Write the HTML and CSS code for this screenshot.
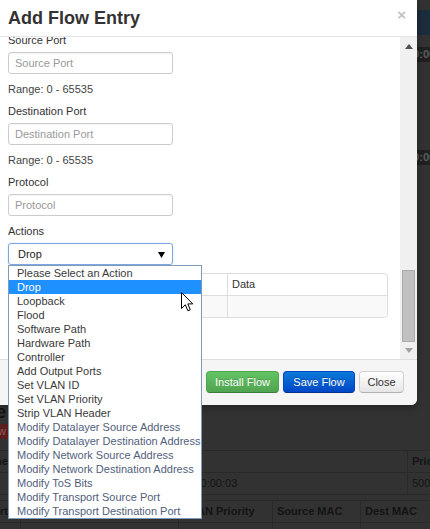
FILE: index.html
```html
<!DOCTYPE html>
<html>
<head>
<meta charset="utf-8">
<title>Add Flow Entry</title>
<link rel="stylesheet" href="styles.css">
</head>
<body>
<div class="page">
  <div class="navbar"></div>
  <div class="band band-1"><span class="c1"></span><span class="c2"></span><span class="c3"></span><span class="c4">00:00:00:00:00:00:00:01</span></div>
  <div class="band band-2"><span class="c1"></span><span class="c2"></span><span class="c3"></span><span class="c4">00:00:00:00:00:00:00:02</span></div>
  <div class="cut-row title-row"><h2 class="page-title">Flow Table</h2></div>
  <div class="cut-row btn-row"><span class="btn-danger">Add Flow</span></div>
  <div class="bg-table t1">
    <div class="bg-row head"><span class="c1">Name</span><span class="c2"></span><span class="c3"></span><span class="c4">Priority</span></div>
    <div class="bg-row"><span class="c1"></span><span class="c2"></span><span class="c3">00:00:00:00:00:00:00:03</span><span class="c4">500</span></div>
  </div>
  <div class="bg-table t2">
    <div class="bg-row head"><span class="c1">Port</span><span class="c2"></span><span class="c3">VLAN Priority</span><span class="c4">Source MAC</span><span class="c5">Dest MAC</span></div>
    <div class="bg-row"><span class="c1"></span><span class="c2">0.000</span><span class="c3">0</span><span class="c4">any</span><span class="c5">any</span></div>
  </div>
</div>

<div class="modal">
  <div class="modal-header">
    <h3>Add Flow Entry</h3>
    <span class="close">×</span>
  </div>
  <div class="modal-body">
    <div class="body-content">
      <div class="field">
        <label class="field-label">Source Port</label>
        <input class="text-input" type="text" placeholder="Source Port">
        <div class="help">Range: 0 - 65535</div>
      </div>
      <div class="field">
        <label class="field-label">Destination Port</label>
        <input class="text-input" type="text" placeholder="Destination Port">
        <div class="help">Range: 0 - 65535</div>
      </div>
      <div class="field">
        <label class="field-label">Protocol</label>
        <input class="text-input" type="text" placeholder="Protocol">
      </div>
      <div class="field">
        <label class="field-label">Actions</label>
        <div class="select">
          <span>Drop</span>
          <svg class="select-arrow" width="7" height="6" viewBox="0 0 7 6"><polygon points="0,0 7,0 3.5,6" fill="#000"/></svg>
        </div>
      </div>
      <div class="flow-table">
        <div class="ft-row ft-head"><span class="ft-cell"></span><span class="ft-cell ft-data">Data</span></div>
        <div class="ft-row ft-body"><span class="ft-cell"></span><span class="ft-cell ft-data"></span></div>
      </div>
    </div>
    <div class="scrollbar">
      <div class="sb-btn"><svg width="8" height="5" viewBox="0 0 8 5"><polygon points="0,5 4,0 8,5" fill="#505050"/></svg></div>
      <div class="sb-track"><div class="sb-thumb"></div></div>
      <div class="sb-btn"><svg width="8" height="5" viewBox="0 0 8 5"><polygon points="0,0 8,0 4,5" fill="#a3a3a3"/></svg></div>
    </div>
  </div>
  <div class="modal-footer">
    <button class="btn btn-success">Install Flow</button>
    <button class="btn btn-primary">Save Flow</button>
    <button class="btn btn-default">Close</button>
  </div>
</div>

<ul class="select-menu">
  <li>Please Select an Action</li>
  <li class="selected">Drop</li>
  <li>Loopback</li>
  <li>Flood</li>
  <li>Software Path</li>
  <li>Hardware Path</li>
  <li>Controller</li>
  <li>Add Output Ports</li>
  <li>Set VLAN ID</li>
  <li>Set VLAN Priority</li>
  <li>Strip VLAN Header</li>
  <li class="mod">Modify Datalayer Source Address</li>
  <li class="mod">Modify Datalayer Destination Address</li>
  <li class="mod">Modify Network Source Address</li>
  <li class="mod">Modify Network Destination Address</li>
  <li class="mod">Modify ToS Bits</li>
  <li class="mod">Modify Transport Source Port</li>
  <li class="mod">Modify Transport Destination Port</li>
</ul>

<svg class="cursor" width="13" height="20" viewBox="0 0 13 20"><path d="M0.5 0.5 V16.5 L4.3 12.8 L6.9 18.8 L9.3 17.8 L6.8 11.9 H11.8 Z" fill="#fff" stroke="#000" stroke-width="1" stroke-linejoin="miter"/></svg>
</body>
</html>
```

FILE: styles.css
```css
* { box-sizing: border-box; }

html, body {
  margin: 0;
  padding: 0;
}

body {
  width: 430px;
  height: 529px;
  overflow: hidden;
  position: relative;
  background: #323232;
  font-family: "Liberation Sans", Arial, sans-serif;
  font-size: 11px;
  color: #333;
}

/* ---------- background page (under the overlay) ---------- */
.page {
  margin-left: -20px;
  width: 470px;
  color: #141414;
}

.navbar {
  margin-top: 10px;
  height: 25px;
  background: #1b2c3d;
}

.band,
.bg-row {
  display: grid;
  grid-template-columns: 40px 94px 293px 1fr;
}

.band {
  background: #202020;
  color: #5e5e5e;
  line-height: 15px;
  height: 15px;
  font-weight: bold;
}

.band-1 { margin-top: 12px; }
.band-2 { margin-top: 88px; }

.band .c4 { padding-left: 0; }

.cut-row {
  width: 40px;
  display: flex;
  justify-content: flex-end;
  white-space: nowrap;
}

.title-row {
  margin-top: 237px;
  padding-right: 14px;
}

.page-title {
  margin: 0;
  font-size: 18px;
  line-height: 20px;
  font-weight: bold;
  color: #141414;
}

.btn-row {
  margin-top: 2px;
  padding-right: 12px;
}

.btn-danger {
  display: block;
  height: 15px;
  line-height: 15px;
  padding: 0 2px 0 6px;
  background: #5a1f1c;
  color: #8e5d5a;
  border-radius: 2px;
  font-size: 11px;
}

.bg-table {
  border-top: 1px solid #292929;
}

.t1 { margin-top: 11px; }
.t2 { margin-top: 5px; }

.bg-row {
  height: 22px;
  line-height: 21px;
  border-bottom: 1px solid #292929;
  white-space: nowrap;
}

.bg-row > span {
  padding-left: 4px;
  overflow: hidden;
}

.bg-row .c1 {
  display: flex;
  justify-content: flex-end;
  padding: 0 12px 0 0;
  overflow: visible;
}

.bg-row .c4 { border-left: 1px solid #292929; }

.bg-row.head { font-weight: bold; }

.t1 .c3 { padding-left: 4px; }

.t2 .bg-row {
  grid-template-columns: 40px 158px 94px 88px 1fr;
}

.t2 .bg-row > span + span { border-left: 1px solid #292929; }
.t2 .c2 { padding-left: 50px; }

/* ---------- modal ---------- */
.modal {
  position: absolute;
  left: 0;
  top: 0;
  width: 417px;
  background: #fff;
  border-radius: 0 0 6px 0;
  box-shadow: 0 3px 7px rgba(0, 0, 0, 0.3);
}

.modal-header {
  height: 37px;
  border-bottom: 1px solid #e5e5e5;
  display: flex;
  justify-content: space-between;
  align-items: flex-start;
  padding: 0 11px 0 8px;
}

.modal-header h3 {
  margin: 0;
  font-size: 18px;
  line-height: 36px;
  font-weight: bold;
  color: #333;
}

.close {
  font-size: 15px;
  line-height: 30px;
  font-weight: bold;
  color: #c2c2c2;
}

.modal-body {
  height: 322px;
  display: flex;
}

.body-content {
  flex: 1;
  overflow: hidden;
  padding-left: 8px;
}

.field {
  display: flex;
  flex-direction: column;
  align-items: flex-start;
  margin-bottom: 8px;
}

.field:first-child { margin-top: -4px; }

.field-label {
  line-height: 14px;
  height: 14px;
  margin-bottom: 5px;
  color: #333;
}

.text-input {
  width: 165px;
  height: 22px;
  margin: 0;
  border: 1px solid #cccccc;
  border-radius: 3px;
  padding: 0 6px;
  font-family: "Liberation Sans", Arial, sans-serif;
  font-size: 11px;
  color: #555;
  background: #fff;
  outline: none;
  box-shadow: inset 0 1px 1px rgba(0, 0, 0, 0.04);
}

.text-input::placeholder { color: #999; }

.help {
  margin-top: 8px;
  line-height: 14px;
  height: 14px;
  color: #444;
}

.select {
  width: 165px;
  height: 22px;
  border: 1px solid #7da7e2;
  border-radius: 3px;
  display: flex;
  align-items: center;
  justify-content: space-between;
  padding: 0 7px 0 9px;
  color: #222;
  box-shadow: 0 0 2px rgba(82, 168, 236, 0.35);
}

.select-arrow { margin-top: 1px; }

.flow-table {
  width: 380px;
  border: 1px solid #dddddd;
  border-radius: 4px;
  overflow: hidden;
}

.ft-row {
  display: grid;
  grid-template-columns: 218px 1fr;
  height: 21px;
  line-height: 21px;
}

.ft-head { border-bottom: 1px solid #dddddd; height: 22px; }
.ft-body { background: #f9f9f9; }

.ft-cell { padding-left: 4px; color: #333; }
.ft-data { border-left: 1px solid #dddddd; }

/* fake scrollbar */
.scrollbar {
  width: 17px;
  background: #f0f0f0;
  display: flex;
  flex-direction: column;
}

.sb-btn {
  height: 17px;
  display: flex;
  justify-content: center;
  align-items: flex-start;
}

.sb-btn:first-child { padding-top: 7px; }
.sb-btn:last-child { padding-top: 6px; }

.sb-track {
  flex: 1;
  display: flex;
  flex-direction: column;
  justify-content: flex-end;
  padding: 0 2px;
}

.sb-thumb {
  height: 72px;
  background: #c1c1c1;
  border: 1px solid #acacac;
}

.modal-footer {
  border-top: 1px solid #dddddd;
  background: #f5f5f5;
  border-radius: 0 0 6px 0;
  height: 46px;
  padding: 11px 13px 0 0;
  display: flex;
  justify-content: flex-end;
  align-items: flex-start;
  gap: 4px;
}

.btn {
  height: 22px;
  margin: 0;
  padding: 0;
  border: 1px solid;
  border-radius: 4px;
  font-family: "Liberation Sans", Arial, sans-serif;
  font-size: 11px;
  line-height: 20px;
  text-align: center;
}

.btn-success {
  width: 73px;
  color: #fff;
  background: linear-gradient(#62c462, #51a351);
  border-color: #51a351 #51a351 #3d7a3d;
  text-shadow: 0 -1px 0 rgba(0, 0, 0, 0.2);
}

.btn-primary {
  width: 72px;
  color: #fff;
  background: linear-gradient(#0a7ad9, #0046c6);
  border-color: #0046c6 #0046c6 #002f8a;
  text-shadow: 0 -1px 0 rgba(0, 0, 0, 0.25);
}

.btn-default {
  width: 45px;
  color: #333;
  background: linear-gradient(#ffffff, #e6e6e6);
  border-color: #d0d0d0 #d0d0d0 #b3b3b3;
}

/* open native dropdown */
.select-menu {
  position: absolute;
  left: 8px;
  top: 265px;
  width: 194px;
  margin: 0;
  padding: 0;
  list-style: none;
  background: #fff;
  border: 1px solid #7f9ab8;
}

.select-menu li {
  height: 14px;
  line-height: 14px;
  padding-left: 8px;
  color: #3a3a3a;
  white-space: nowrap;
}

.select-menu li.mod { color: #52607c; }

.select-menu li.selected {
  background: #1e90ff;
  color: #fff;
}

.cursor {
  position: absolute;
  left: 181px;
  top: 292px;
}
```
